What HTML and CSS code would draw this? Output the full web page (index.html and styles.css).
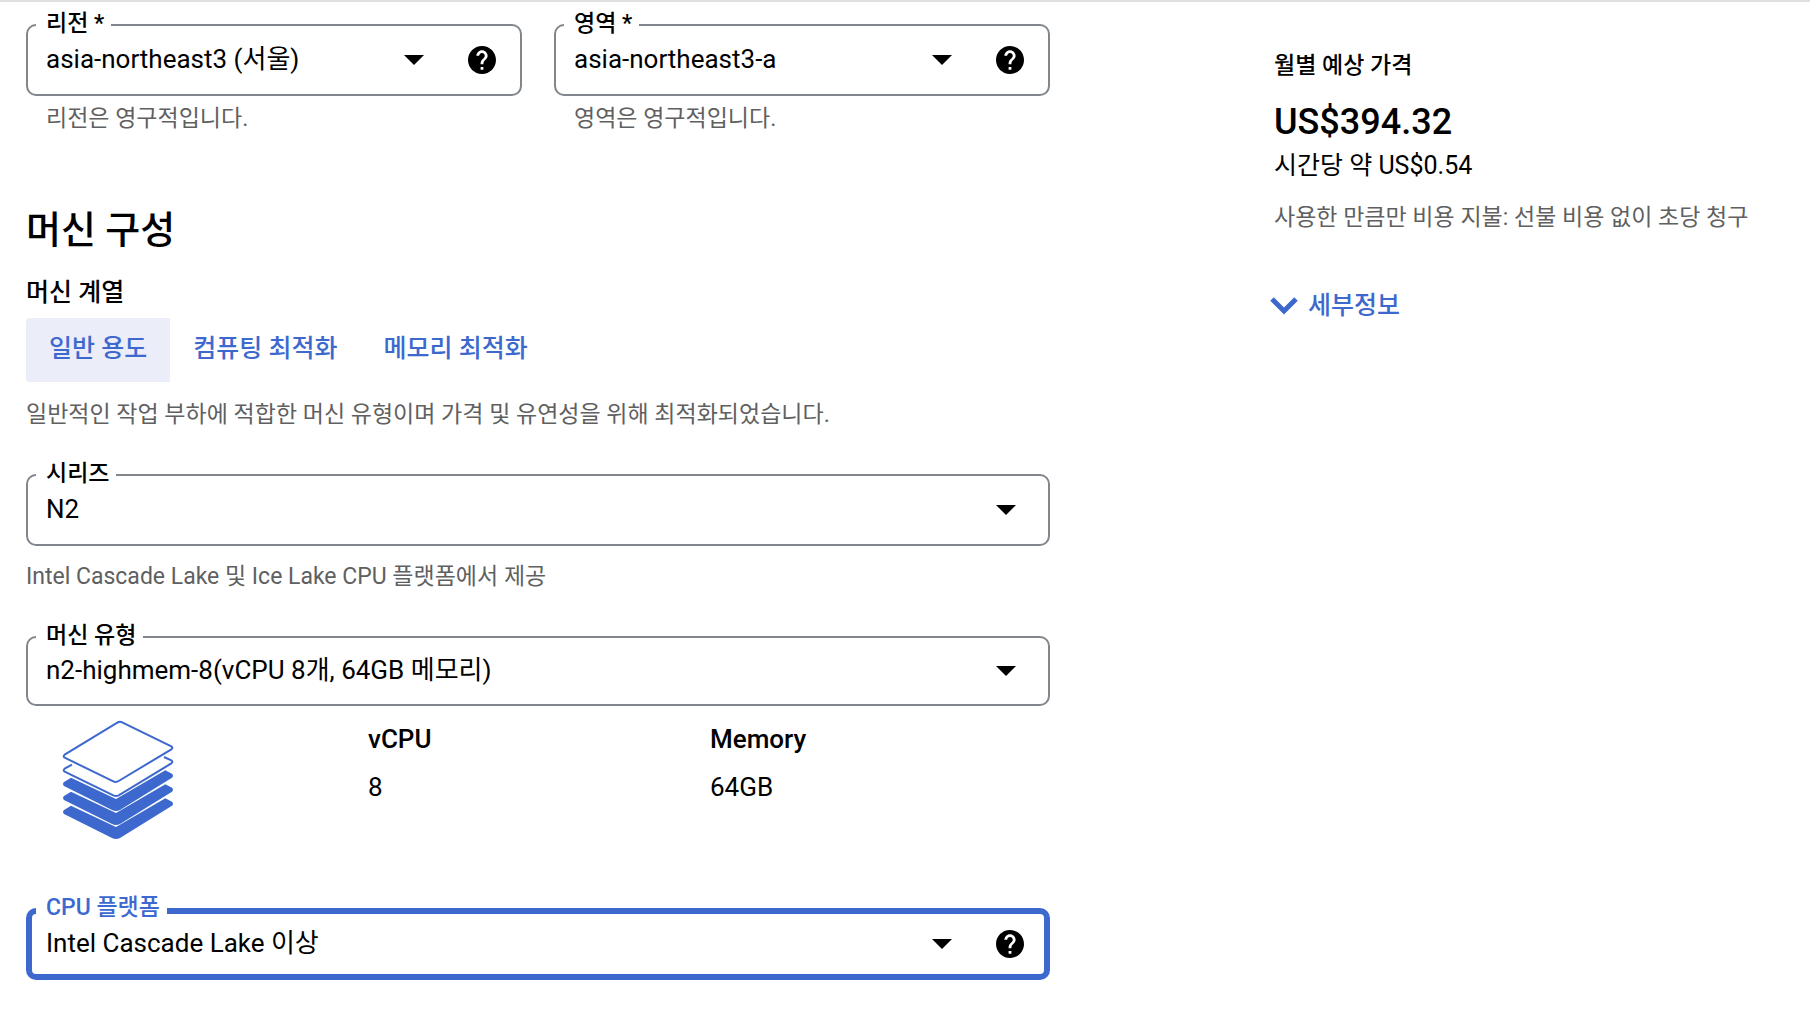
FILE: index.html
```html
<!DOCTYPE html>
<html lang="ko">
<head>
    <meta charset="UTF-8">
    <meta name="viewport" content="width=device-width, initial-scale=1.0">
    <title>머신 구성</title>
    <link rel="stylesheet" href="styles.css">
</head>
<body>
    <div class="page">
        <main class="config">
            <div class="location">
                <div>
                    <div class="field">
                        <label class="field-label" for="region">리전 *</label>
                        <select class="field-select" id="region">
                            <option>asia-northeast3 (서울)</option>
                        </select>
                        <svg class="arrow" viewBox="0 0 20 10"><path d="M0 0h20L10 10z"/></svg>
                        <button class="help" type="button" aria-label="리전 도움말">
                            <svg viewBox="2 2 20 20"><path d="M12 2C6.48 2 2 6.48 2 12s4.48 10 10 10 10-4.48 10-10S17.52 2 12 2zm1 17h-2v-2h2v2zm2.07-7.75l-.9.92C13.45 12.9 13 13.5 13 15h-2v-.5c0-1.1.45-2.1 1.17-2.83l1.24-1.26c.37-.36.59-.86.59-1.41 0-1.1-.9-2-2-2s-2 .9-2 2H8c0-2.21 1.79-4 4-4s4 1.79 4 4c0 .88-.36 1.68-.93 2.25z"/></svg>
                        </button>
                    </div>
                    <p class="hint hint-inset">리전은 영구적입니다.</p>
                </div>
                <div>
                    <div class="field">
                        <label class="field-label" for="zone">영역 *</label>
                        <select class="field-select" id="zone">
                            <option>asia-northeast3-a</option>
                        </select>
                        <svg class="arrow" viewBox="0 0 20 10"><path d="M0 0h20L10 10z"/></svg>
                        <button class="help" type="button" aria-label="영역 도움말">
                            <svg viewBox="2 2 20 20"><path d="M12 2C6.48 2 2 6.48 2 12s4.48 10 10 10 10-4.48 10-10S17.52 2 12 2zm1 17h-2v-2h2v2zm2.07-7.75l-.9.92C13.45 12.9 13 13.5 13 15h-2v-.5c0-1.1.45-2.1 1.17-2.83l1.24-1.26c.37-.36.59-.86.59-1.41 0-1.1-.9-2-2-2s-2 .9-2 2H8c0-2.21 1.79-4 4-4s4 1.79 4 4c0 .88-.36 1.68-.93 2.25z"/></svg>
                        </button>
                    </div>
                    <p class="hint hint-inset">영역은 영구적입니다.</p>
                </div>
            </div>

            <h1 class="title">머신 구성</h1>
            <h2 class="subtitle">머신 계열</h2>
            <div class="tabs" role="tablist">
                <button class="tab active" type="button" role="tab" aria-selected="true">일반 용도</button>
                <button class="tab" type="button" role="tab" aria-selected="false">컴퓨팅 최적화</button>
                <button class="tab" type="button" role="tab" aria-selected="false">메모리 최적화</button>
            </div>
            <p class="hint family-hint">일반적인 작업 부하에 적합한 머신 유형이며 가격 및 유연성을 위해 최적화되었습니다.</p>

            <div class="field">
                <label class="field-label" for="series">시리즈</label>
                <select class="field-select" id="series">
                    <option>N2</option>
                </select>
                <svg class="arrow" viewBox="0 0 20 10"><path d="M0 0h20L10 10z"/></svg>
            </div>
            <p class="hint series-hint">Intel Cascade Lake 및 Ice Lake CPU 플랫폼에서 제공</p>

            <div class="field field-type">
                <label class="field-label" for="machine-type">머신 유형</label>
                <select class="field-select" id="machine-type">
                    <option>n2-highmem-8(vCPU 8개, 64GB 메모리)</option>
                </select>
                <svg class="arrow" viewBox="0 0 20 10"><path d="M0 0h20L10 10z"/></svg>
            </div>

            <div class="specs">
                <svg class="stack" viewBox="66 60 336 360">
                    <!-- filled layers, bottom one first -->
                    <g class="stack-solid">
                        <path d="M93 317L228 381L376 295L396 305Q402 311 396 317L240 414Q228 420 216 414L72 342Q66 336 72 330Z"/>
                        <path d="M93 275L228 339L376 253L396 263Q402 269 396 275L240 372Q228 378 216 372L72 300Q66 294 72 288Z"/>
                        <path d="M93 233L228 297L376 211L396 221Q402 227 396 233L240 330Q228 336 216 330L72 258Q66 252 72 246Z"/>
                    </g>
                    <g class="stack-line">
                        <path d="M96 194L74 206Q68 211 74 215L220 286Q228 290 236 286L394 190Q400 185 394 181L372 171"/>
                        <path d="M232 68Q240 63 248 68L394 139Q400 143 394 148L236 243Q228 248 220 244L74 173Q68 169 74 164Z"/>
                    </g>
                </svg>
                <dl class="spec">
                    <dt>vCPU</dt>
                    <dd>8</dd>
                </dl>
                <dl class="spec">
                    <dt>Memory</dt>
                    <dd>64GB</dd>
                </dl>
            </div>

            <div class="field focused">
                <label class="field-label" for="cpu-platform">CPU 플랫폼</label>
                <select class="field-select" id="cpu-platform">
                    <option>Intel Cascade Lake 이상</option>
                </select>
                <svg class="arrow" viewBox="0 0 20 10"><path d="M0 0h20L10 10z"/></svg>
                <button class="help" type="button" aria-label="CPU 플랫폼 도움말">
                    <svg viewBox="2 2 20 20"><path d="M12 2C6.48 2 2 6.48 2 12s4.48 10 10 10 10-4.48 10-10S17.52 2 12 2zm1 17h-2v-2h2v2zm2.07-7.75l-.9.92C13.45 12.9 13 13.5 13 15h-2v-.5c0-1.1.45-2.1 1.17-2.83l1.24-1.26c.37-.36.59-.86.59-1.41 0-1.1-.9-2-2-2s-2 .9-2 2H8c0-2.21 1.79-4 4-4s4 1.79 4 4c0 .88-.36 1.68-.93 2.25z"/></svg>
                </button>
            </div>
        </main>

        <aside class="estimate">
            <h2 class="estimate-title">월별 예상 가격</h2>
            <p class="price">US$394.32</p>
            <p class="hourly">시간당 약 US$0.54</p>
            <p class="hint estimate-hint">사용한 만큼만 비용 지불: 선불 비용 없이 초당 청구</p>
            <button class="details" type="button">
                <svg class="chevron" viewBox="0 0 28 18"><path d="M2 2l12 12L26 2"/></svg>
                세부정보
            </button>
        </aside>
    </div>
</body>
</html>
```
FILE: styles.css
```css
* {
    box-sizing: border-box;
}
body {
    margin: 0;
    background-color: #fff;
    color: #000;
    font-family: Roboto, "Noto Sans CJK KR", sans-serif;
    font-size: 25px;
    line-height: 32px;
}
h1, h2, p, dl, dd {
    margin: 0;
}
button, select {
    margin: 0;
    padding: 0;
    border: 0;
    background: none;
    color: inherit;
    font: inherit;
}
.page {
    display: grid;
    grid-template-columns: 1024fr 510fr;
    gap: 224px;
    padding: 22px 26px 48px;
    border-top: 2px solid #e0e0e0;
}
.location {
    display: grid;
    grid-template-columns: 1fr 1fr;
    gap: 32px;
}

/* outlined select */
.field {
    position: relative;
    display: flex;
    align-items: center;
    height: 72px;
    padding: 0 24px 0 18px;
    border: 2px solid #80868b;
    border-radius: 10px;
}
.field-type {
    height: 70px;
}
.field-label {
    position: absolute;
    top: -18px;
    left: 8px;
    padding: 0 7px 0 10px;
    background-color: #fff;
    font-size: 23px;
    font-weight: 500;
}
.field-select {
    flex: 1;
    min-width: 0;
    height: 48px;
    padding-bottom: 2px;
    font-size: 26px;
    appearance: none;
    outline: none;
}
.arrow {
    width: 20px;
    height: 10px;
    margin-right: 10px;
    pointer-events: none;
}
.field > .arrow:last-child {
    margin-right: 8px;
}
.help {
    width: 28px;
    height: 28px;
    margin-left: 34px;
}
.help svg {
    display: block;
}
.focused {
    padding: 0 20px 0 14px;
    border: 6px solid #3d69cf;
}
.focused .field-label {
    top: -22px;
    left: 4px;
    color: #3d69cf;
}

.hint {
    color: #606060;
    font-size: 23px;
}
.hint-inset {
    margin-top: 7px;
    padding-left: 20px;
}
.title {
    margin-top: 71px;
    font-size: 38px;
    font-weight: 500;
    line-height: 48px;
}
.subtitle {
    margin-top: 23px;
    font-size: 25px;
    font-weight: 500;
}
.tabs {
    display: flex;
    margin-top: 9px;
}
.tab {
    height: 64px;
    padding: 0 23px 2px;
    color: #3d69cf;
    font-weight: 500;
}
.tab.active {
    background-color: #ebedf9;
    border-radius: 4px 0 0 4px;
}
.family-hint {
    margin: 17px 0 43px;
}
.series-hint {
    margin: 15px 0 43px;
}

.specs {
    display: grid;
    grid-template-columns: repeat(3, 1fr);
    column-gap: 2px;
    margin: 14px 0 68px;
    line-height: 36px;
}
.stack {
    width: 112px;
    height: 120px;
    margin-left: 36px;
}
.stack-solid {
    fill: #3d69cf;
}
.stack-line {
    fill: #fff;
    stroke: #3d69cf;
    stroke-width: 6;
}
.spec {
    padding-top: 1px;
    font-size: 26px;
}
.spec dt {
    margin-bottom: 12px;
    font-weight: 500;
}

.estimate {
    padding-top: 26px;
}
.estimate-title {
    font-size: 23px;
    font-weight: 500;
}
.price {
    margin-top: 18px;
    font-size: 36px;
    font-weight: 500;
    line-height: 44px;
}
.hourly {
    margin-top: 6px;
}
.estimate-hint {
    margin-top: 20px;
}
.details {
    display: flex;
    align-items: center;
    gap: 10px;
    margin-top: 56px;
    margin-left: -4px;
    color: #3d69cf;
    font-weight: 500;
}
.chevron {
    width: 28px;
    height: 18px;
    fill: none;
    stroke: #3d69cf;
    stroke-width: 5;
}
```
